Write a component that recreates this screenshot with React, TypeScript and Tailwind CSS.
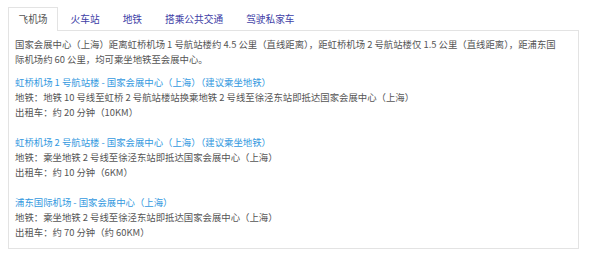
import React from "react";

const tabs = ["飞机场", "火车站", "地铁", "搭乘公共交通", "驾驶私家车"];

const routes = [
  {
    title: "虹桥机场 1 号航站楼 - 国家会展中心（上海）（建议乘坐地铁）",
    metro: "地铁：地铁 10 号线至虹桥 2 号航站楼站换乘地铁 2 号线至徐泾东站即抵达国家会展中心（上海）",
    taxi: "出租车：约 20 分钟（10KM）",
  },
  {
    title: "虹桥机场 2 号航站楼 - 国家会展中心（上海）（建议乘坐地铁）",
    metro: "地铁：乘坐地铁 2 号线至徐泾东站即抵达国家会展中心（上海）",
    taxi: "出租车：约 10 分钟（6KM）",
  },
  {
    title: "浦东国际机场 - 国家会展中心（上海）",
    metro: "地铁：乘坐地铁 2 号线至徐泾东站即抵达国家会展中心（上海）",
    taxi: "出租车：约 70 分钟（约 60KM）",
  },
];

export default function App() {
  return (
    <div
      className="w-[600px] h-[254px] bg-white pl-[8px] pt-[7px] font-['Noto_Sans_CJK_SC',sans-serif]"
      lang="zh-CN"
    >
      <div className="w-[571px]">
        <div className="flex gap-[2px] relative z-10">
          {tabs.map((t, i) => (
            <div
              key={t}
              className={
                i === 0
                  ? "h-[24px] px-[9.5px] border border-b-0 border-[#e3e3e3] bg-white text-[#555] text-[9.7px] leading-[23px] whitespace-nowrap"
                  : "h-[24px] px-[9.5px] border border-transparent text-[#3d3da6] text-[9.7px] leading-[23px] whitespace-nowrap"
              }
            >
              {t}
            </div>
          ))}
        </div>
        <div className="-mt-px h-[219px] border border-[#e3e3e3] pl-[6px] pt-[5.5px] text-[9.4px] leading-[15px] text-[#555] whitespace-nowrap">
          <p>
            国家会展中心（上海）距离虹桥机场 1 号航站楼约 4.5 公里（直线距离），距虹桥机场 2 号航站楼仅 1.5 公里（直线距离），距浦东国
            <br />
            际机场约 60 公里，均可乘坐地铁至会展中心。
          </p>
          <div className="mt-[8.5px] flex flex-col gap-[15px]">
            {routes.map((r) => (
              <div key={r.title}>
                <p className="text-[#3399e0]">{r.title}</p>
                <p>{r.metro}</p>
                <p>{r.taxi}</p>
              </div>
            ))}
          </div>
        </div>
      </div>
    </div>
  );
}
